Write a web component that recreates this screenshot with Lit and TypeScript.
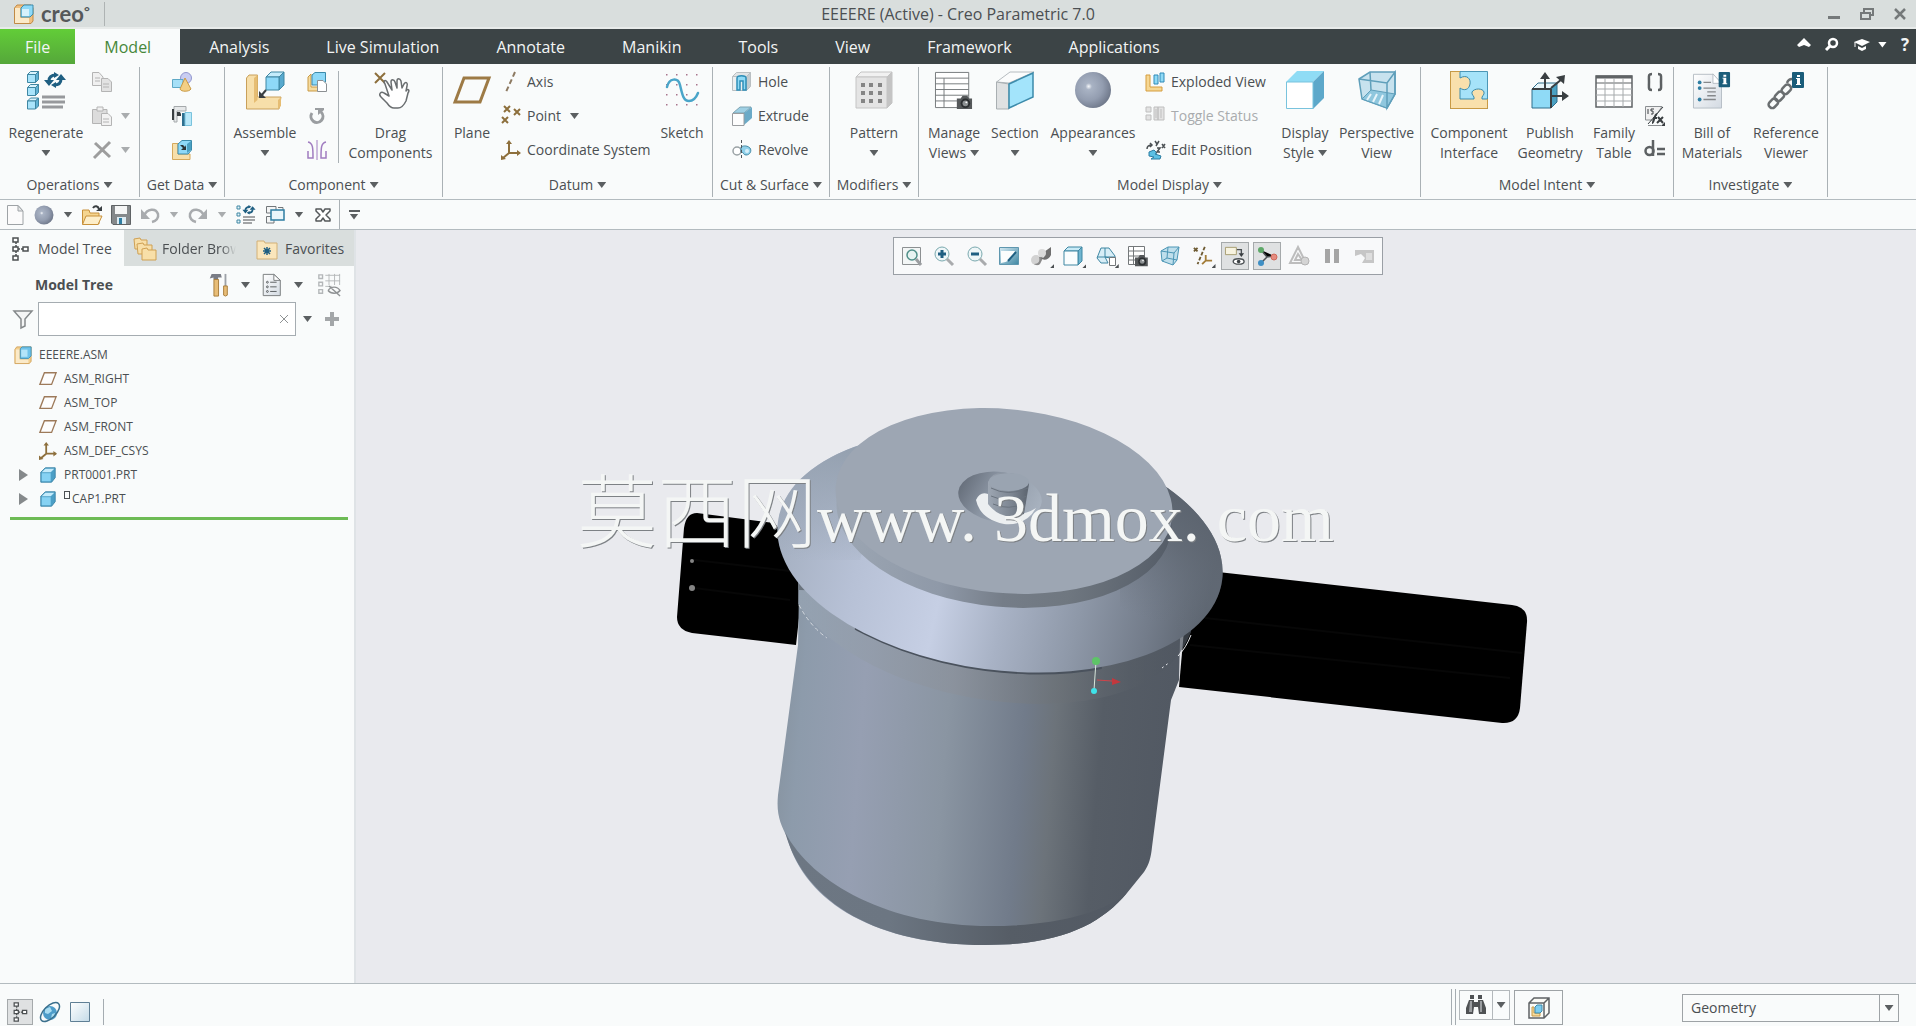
import { LitElement, html, svg, css, nothing, type TemplateResult, type SVGTemplateResult } from "lit";
import { customElement, state } from "lit/decorators.js";
import { classMap } from "lit/directives/class-map.js";

/* ---------- icon drawing helpers ---------- */

const OUT = "#3f87a3";

/** A box seen from the front right: front face, top face, side face. */
const box = (x: number, y: number, s: number, d: number, front = "#a9e4fb", top = "#d9f3fd", side = "#5fb1d3", line = OUT, w = 1): SVGTemplateResult => svg`
  <g stroke=${line} stroke-width=${w} stroke-linejoin="round">
    <path fill=${top} d=${`M${x} ${y + d}L${x + d} ${y}H${x + s + d}L${x + s} ${y + d}Z`}></path>
    <path fill=${side} d=${`M${x + s} ${y + d}L${x + s + d} ${y}V${y + s}L${x + s} ${y + s + d}Z`}></path>
    <path fill=${front} d=${`M${x} ${y + d}H${x + s}V${y + s + d}H${x}Z`}></path>
  </g>`;

const camera = (x: number, y: number): SVGTemplateResult => svg`
  <g transform=${`translate(${x} ${y})`}>
    <path fill="#55585a" d="M0 3H4L6 0H11L13 3H16V14H0Z"></path>
    <circle cx="9" cy="8" r="5" fill="#2c2f31"></circle>
    <circle cx="9" cy="8" r="3" fill="#8d9193"></circle>
    <circle cx="10" cy="7" r="1" fill="#fff"></circle>
  </g>`;

/** Two arrows chasing each other. */
const swirl = (x: number, y: number, k: number): SVGTemplateResult => svg`
  <g transform=${`translate(${x} ${y}) scale(${k})`}>
    <path fill="none" stroke="#1f5f82" stroke-width="3" d="M4 9C4 4 7 3 11 3M16 7C16 12 13 13 9 13"></path>
    <path fill="#1f5f82" d="M-1 8H9L4 14ZM11 8H21L16 2ZM9 0L14 3L9 6ZM11 10L6 13L11 16Z"></path>
  </g>`;

const info = (x: number, y: number): SVGTemplateResult => svg`
  <g transform=${`translate(${x} ${y})`}>
    <rect width="12" height="16" rx="1" fill="#1b5d7a"></rect>
    <path fill="#fff" d="M5 3H8V5H5ZM4 6H8V12H9V13H4V12H5V7H4Z"></path>
  </g>`;

const treeNodes = (c: string): SVGTemplateResult => svg`<g fill="#fff" stroke=${c} stroke-width="1.5"><path d="M2 1H7V5H2ZM2 10H7V14H2ZM2 19H7V23H2ZM12 10H17V14H12Z"></path><path stroke-dasharray="2 1" d="M5 5V10M5 14V19M7 12H12"></path></g>`;

const axes = svg`<path fill="none" stroke="#8d6f3c" stroke-width="2" d="M8 3V13H19M8 13L2 18"></path><path fill="#8d6f3c" d="M8 0L11 4H5ZM16 10L20 13L16 16ZM0 20V15L5 19Z"></path>`;
const cross = (x: number, y: number, r: number, c = "#8d6f3c", w = 2): SVGTemplateResult => svg`<path stroke=${c} stroke-width=${w} d=${`M${x - r} ${y - r}L${x + r} ${y + r}M${x + r} ${y - r}L${x - r} ${y + r}`}></path>`;
const lBracket = svg`<path fill="#f6dca0" stroke="#c99a45" d="M1 5L4 2V15H19L16 19H1Z"></path>`;

type Icon = { box: string; art: SVGTemplateResult };
const ICONS: Record<string, Icon> = {
  /* large ribbon icons, 38 units */
  regenerate: { box: "0 0 38 38", art: svg`${box(0.5, 0.5, 8, 3)}${box(0.5, 13.5, 8, 3)}${box(0.5, 27, 8, 3)}${swirl(18, 1, 1)}<path stroke="#97999c" stroke-width="3" d="M15 26H38M15 31H38M15 36H36"></path>` },
  assemble: { box: "0 0 38 38", art: svg`
    <path fill="#f7dfaa" stroke="#c9a05a" d="M0.5 7L3 4H11.5V26H35L33 38H0.5Z"></path><path fill="#e6bd73" d="M8 7L11.5 4V29L8 32ZM32 29L35 26V35L32 38Z"></path>
    ${box(20, 1, 13, 5, "#8ed9f8", "#c4ecfb", "#58a9ce")}<path stroke="#3a3f42" stroke-width="2" d="M20 19L15 25"></path><path fill="#3a3f42" d="M13 20V27H20Z"></path>` },
  drag: { box: "0 0 38 38", art: svg`${cross(8, 7, 5, "#8d6f3c", 2)}
    <path fill="#fff" stroke="#6a6e70" stroke-width="1.5" stroke-linejoin="round" stroke-linecap="round" d="M13 13C11 10 13 8 15 11L20 19L19 11C19 8 22 8 23 11L25 17V10C25 7 28 7 29 10L30 17L32 13C34 10 36 12 35 15L34 20C36 17 38 19 36 22L34 30C32 34 30 37 26 37H22C19 37 17 35 15 32L9 26C6 23 9 20 12 22L17 25Z"></path>` },
  plane: { box: "0 0 38 38", art: svg`<path fill="none" stroke="#9d7a45" stroke-width="3" d="M11 7H36L27 31H2Z"></path>` },
  sketch: { box: "0 0 38 38", art: svg`<g fill="#a8748c">${[4, 14, 24, 34].map((x) => [4, 14, 24, 34].map((y) => svg`<rect x=${x - 1} y=${y - 1} width="1.5" height="1.5"></rect>`))}</g>
    <path fill="none" stroke="#4aa5c9" stroke-width="2.5" stroke-linecap="round" d="M4 16C6 7 15 6 17 14C19 22 20 30 26 30C31 30 33 27 35 22"></path>` },
  pattern: { box: "0 0 38 38", art: svg`${box(1, 1, 31, 5, "#e4e4e4", "#f1f1f1", "#c4c4c4", "#c4c4c4")}
    <g fill="#858585">${[6, 14, 23].map((x) => [12, 20, 28].map((y) => svg`<rect x=${x} y=${y} width="4" height="4"></rect>`))}</g>` },
  manage: { box: "0 0 40 38", art: svg`<path fill="#fff" stroke="#74787a" stroke-width="1" d="M0.5 0.5H35.5V37.5H0.5ZM0.5 6.5H35.5M0.5 12.5H35.5M0.5 18.5H35.5M0.5 24.5H35.5M0.5 30.5H35.5M9.5 6.5V37.5"></path>${camera(23, 25)}` },
  section: { box: "0 0 38 38", art: svg`<path fill="#fbfcfc" stroke="#b6bcc0" d="M0.5 11L14 1H38L13 12Z"></path><path fill="#dfe1e2" stroke="#a9afb2" d="M0.5 11L13 13V38H0.5Z"></path><path fill="#a3e4fb" stroke="#3c8bab" stroke-width="1.5" d="M13 13L37 2V26L13 37Z"></path>` },
  sphere: { box: "0 0 38 38", art: svg`<circle cx="19" cy="19" r="18" fill="url(#g-sphere)"></circle>` },
  display: { box: "0 0 38 38", art: svg`<path fill="#8fdcf5" d="M0 11L11 0H38L27 11Z"></path><path fill="#5da8ca" d="M27 11L38 0V27L27 38Z"></path><path fill="#fff" stroke="#79c3dd" d="M0.5 11H27V37.5H0.5Z"></path>` },
  perspective: { box: "0 0 38 38", art: svg`<path fill="#c7e2ee" stroke="#5f9fba" stroke-width="1.5" d="M1 8L12 1H37L37 23L29 37L4 28Z"></path><path fill="#8fc7de" stroke="#5f9fba" d="M4 28L13 19L37 23L29 37Z"></path><path fill="none" stroke="#5f9fba" stroke-width="1.5" d="M1 8L29 12L37 1V23L29 37V12M12 1L13 19"></path><path stroke="#e6f4fa" stroke-width="2" d="M13 23L9 29M19 23L15 31M25 24L21 33"></path>` },
  interface: { box: "0 0 38 38", art: svg`<path fill="#a6e3f9" stroke="#4c96b5" d="M0.5 0.5H37.5V37.5H0.5Z"></path>
    <path fill="#f9e0ac" stroke="#3c8bab" stroke-width="1" d="M0.5 0.5H10V7C17 3 21 8 20 13C19 19 14 20 10 17V28H24C25 25 21 24 22 21C24 17 33 17 34 21C35 24 31 25 32 28H37.5V37.5H0.5Z"></path><path fill="none" stroke="#c99a45" stroke-width="1" d="M37.5 28V37.5H0.5V0.5H10"></path>` },
  publish: { box: "0 0 38 38", art: svg`${box(1, 12, 19, 6, "#8fdaf6", "#e8f6fb", "#4aa0c2", "#2f6f8c")}<path fill="none" stroke="#3a3f42" stroke-width="2" d="M1 18H20M20 18V37M14 18V6M20 17L31 8M21 25H33"></path><path fill="#3a3f42" d="M14 1L19 8H9ZM34 4L33 13L25 6ZM38 25L31 30V20Z"></path>` },
  family: { box: "0 0 38 38", art: svg`<path fill="#fff" stroke="#5f6365" stroke-width="1.5" d="M1 5H37V36H1Z"></path><path stroke="#5f6365" stroke-width="3" d="M1 6H37"></path><path stroke="#5f6365" d="M1 12H37"></path><path stroke="#a6aaac" d="M1 18H37M1 24H37M1 30H37M10 7V36M19 7V36M28 7V36"></path>` },
  bill: { box: "0 0 40 38", art: svg`<path fill="url(#g-paper)" stroke="#b5bdc4" d="M0.5 2.5H21L30 12V38H0.5Z"></path><path fill="#fff" stroke="#b5bdc4" d="M21 2V12H30Z"></path><g fill="#2e7ea3"><circle cx="7" cy="11" r="2"></circle><circle cx="7" cy="17" r="2"></circle><circle cx="7" cy="29" r="2"></circle></g><path stroke="#85888b" stroke-width="1.5" d="M11 11H19M11 17H24M15 21H24M15 25H24M11 29H24"></path>${info(27, 0)}` },
  reference: { box: "0 0 38 38", art: svg`<g fill="none" stroke="#6a6e70" stroke-width="2.5"><rect x="-5" y="-3" width="10" height="7" rx="3" transform="translate(6 32) rotate(-45)"></rect><rect x="-5" y="-3" width="10" height="7" rx="3" transform="translate(12 25) rotate(-45)"></rect><rect x="-5" y="-3" width="10" height="7" rx="3" transform="translate(19 18) rotate(-45)"></rect><path d="M20 12C21 9 23 8 25 8"></path></g>${info(25, 1)}` },

  /* small icons, 20 units */
  copy: { box: "0 0 20 20", art: svg`<g fill="#f0f0f0" stroke="#b4b4b4"><path d="M0.5 0.5H7L11 5V13.5H0.5Z"></path><path fill="#e2e2e2" d="M9.5 6.5H16L19.5 10V19.5H9.5Z"></path></g><path stroke="#b4b4b4" d="M3 6H8M3 9H8M11 12H17M11 15H17"></path>` },
  paste: { box: "0 0 20 20", art: svg`<g stroke="#b4b4b4"><path fill="#dcdcdc" d="M0.5 3.5H15V17.5H0.5Z"></path><path fill="#f0f0f0" d="M5 1H11V5H5Z"></path><path fill="#f2f2f2" d="M9.5 7.5H16L19.5 11V19.5H9.5Z"></path><path d="M11 13H17M11 16H17"></path></g>` },
  remove: { box: "0 0 20 20", art: svg`<path stroke="#9d9d9d" stroke-width="3" d="M3 3L18 17M18 2L2 18"></path>` },
  shapes: { box: "0 0 20 20", art: svg`<circle cx="14" cy="6" r="5.5" fill="#c9cdf2" stroke="#9297cf"></circle><path fill="#a6e0f7" stroke="#5fa9c6" d="M0.5 7.5H11V15.5H0.5Z"></path><path fill="#f3cf85" stroke="#c99a45" d="M13 6L19 17C17 20 9 20 8 17Z"></path>` },
  copygeom: { box: "0 0 20 20", art: svg`<path fill="#e6e8e9" stroke="#a5a9ab" d="M2 0.5H14V5H5V16H2Z"></path><path fill="#3a3f42" d="M0 3H2V14H0Z"></path><path fill="#2e6f8f" d="M10 7H13V20H10Z"></path><path fill="#b9e7f8" stroke="#79c3dd" d="M13 6.5H19.5V19.5H13Z"></path><path fill="#3a3f42" d="M5 6H8L9 8V10H5Z"></path>` },
  shrinkwrap: { box: "0 0 20 20", art: svg`<path fill="#f7dfaa" stroke="#d5a95c" d="M0.5 3.5H6V14H18V19.5H0.5Z"></path><path fill="#8ed9f8" stroke="#3c8bab" d="M6 4L10 0.5H19.5V10L16 14H6Z"></path><path fill="#4aa0c2" d="M15 4L19 1V10L15 13Z"></path><path fill="#2b3437" d="M8 5H11L13 7L14 5V10H9L11 8Z"></path>` },
  create: { box: "0 0 20 20", art: svg`${lBracket}<path fill="#8ed9f8" stroke="#3c8bab" d="M5 3L8 0.5H18.5V10L15 13H5Z"></path><path fill="#fff" stroke="#8b8f92" d="M10.5 8.5H16L19.5 12V19.5H10.5Z"></path>` },
  repeat: { box: "0 0 20 20", art: svg`<path fill="none" stroke="#9a9da0" stroke-width="3" d="M5 7A6 6 0 1 0 14 6"></path><path fill="#9a9da0" d="M8 2H17V4L11 9V4H8Z"></path>` },
  mirror: { box: "0 0 20 20", art: svg`<g fill="none" stroke="#a07cc0" stroke-width="1.5"><path d="M1 2C6 3 6 8 6 18H1V11M19 2C14 3 14 8 14 18H19V11"></path></g><path stroke="#a07cc0" d="M10 0V20"></path>` },
  axis: { box: "0 0 20 20", art: svg`<path stroke="#8d7a62" stroke-width="2" stroke-dasharray="5 3" d="M14 0L5 20"></path>` },
  point: { box: "0 0 20 20", art: svg`${cross(6, 3, 3)}${cross(16, 6, 3)}${cross(4, 14, 3)}` },
  csys: { box: "0 0 20 20", art: axes },
  hole: { box: "0 0 20 20", art: svg`${box(0.5, 0.5, 14, 4, "#eceff0", "#e1e4e5", "#c2cbcf", "#b9bfc2")}<path fill="#8fdaf6" stroke="#2e8fb8" stroke-width="1.5" d="M5 18V6C5 3 14 3 14 6V18H11V9H8V18Z"></path>` },
  extrude: { box: "0 0 20 20", art: svg`<path fill="#9fd0e4" stroke="#7fa4b3" d="M1 7L8 1H19L12 7Z"></path><path fill="#6baac7" d="M12 7L20 1V12L12 19Z"></path><path fill="#fdfdfd" stroke="#9a9da0" d="M0.5 7.5H12V19.5H0.5Z"></path>` },
  revolve: { box: "0 0 20 20", art: svg`<ellipse cx="5" cy="11" rx="4" ry="4" fill="#fff" stroke="#9aa2a5" stroke-width="1.5"></ellipse><path fill="#8fd0ea" stroke="#3f87a3" d="M9 7C12 5 16 6 18 8C20 11 18 15 14 15C11 15 12 12 9 12Z"></path><circle cx="15" cy="11" r="2" fill="#d8f0f9"></circle><path stroke="#50565a" stroke-dasharray="3 2" d="M9.5 0V20"></path>` },
  exploded: { box: "0 0 20 20", art: svg`<path fill="#f6d793" stroke="#d59d3f" stroke-width="1" d="M1 3H5V15H17V19H1Z"></path><path fill="#8fdaf6" stroke="#2f8ab8" d="M9 3H13V12H9ZM15 1H19V10H15Z"></path>` },
  toggle: { box: "0 0 20 20", art: svg`<g fill="#e3e3e3" stroke="#bfbfbf"><path d="M1 1H6V6H1ZM1 9H6V14H1ZM9 1H13V14H9ZM13 1H19V14H13Z"></path><path d="M16 3V12M11 3V12"></path></g>` },
  editpos: { box: "0 0 20 20", art: svg`<path fill="#5cc0e4" stroke="#2e7ea3" d="M4 12L9 10L12 13L10 14L16 16L15 19H6L9 17L4 16Z"></path><path fill="none" stroke="#4b5053" stroke-width="1.5" d="M2 9C2 6 4 5 7 5M5 3L7 5L5 7M10 1L12 4M14 1L11 6M12 8H15L12 12H15M17 4L20 8M20 4L17 8"></path>` },
  params: { box: "0 0 20 20", art: svg`<path fill="none" stroke="#5d6163" stroke-width="2.5" d="M7 2C3 2 4 4 4 10C4 16 3 18 7 18M13 2C17 2 16 4 16 10C16 16 17 18 13 18"></path>` },
  relations: { box: "0 0 20 20", art: svg`<path fill="#f0f0f0" stroke="#8b8f92" d="M0.5 0.5H17L8 14H0.5Z"></path><path fill="none" stroke="#3a3f42" stroke-width="1" d="M3 3V8M9 3H6V5H8V8H6M18 1L3 18"></path><path fill="none" stroke="#3a3f42" stroke-width="2" d="M7 17C9 17 9 9 12 8M8 12H12M13 11L18 17M18 11L12 17"></path><path fill="none" stroke="#8b8f92" d="M3 19.5H16"></path><path fill="#3a3f42" d="M20 16V20H16Z"></path>` },
  dequals: { box: "0 0 20 20", art: svg`<path fill="none" stroke="#5d6163" stroke-width="2.5" d="M8 0V16"></path><circle cx="4.500" cy="11" r="4" fill="none" stroke="#5d6163" stroke-width="2.5"></circle><path stroke="#5d6163" stroke-width="2.5" d="M12 9H20M12 14H20"></path>` },

  /* quick access */
  newfile: { box: "0 0 20 20", art: svg`<path fill="#fbfbfb" stroke="#9ea3a6" d="M2.5 0.5H13L18 6V19.5H2.5Z"></path><path fill="#e6e8e9" stroke="#9ea3a6" d="M13 0.5V6H18Z"></path>` },
  open: { box: "0 0 20 20", art: svg`<path fill="#f5d58f" stroke="#c8913a" d="M0.5 5H7L8 8H17V19H0.5Z"></path><path fill="#fdeec9" stroke="#c8913a" d="M4 11H20L16 19.5H0.5Z"></path><path fill="none" stroke="#3a3f42" stroke-width="2" d="M11 3C13 0 16 1 17 4"></path><path fill="#3a3f42" d="M20 1V6H14Z"></path>` },
  save: { box: "0 0 20 20", art: svg`<path fill="#85898b" stroke="#5f6365" d="M0.5 0.5H19.5V19.5H2L0.5 18Z"></path><path fill="#f5f6f6" d="M4 1H16V9H4Z"></path><path fill="#dcebf2" d="M6 12H15V19H6Z"></path><path fill="#2e7ea3" d="M8 13H11V19H8Z"></path>` },
  undo: { box: "0 0 20 20", art: svg`<path fill="none" stroke="#a8abae" stroke-width="2.5" d="M4 11C7 3 16 3 18 9C19 13 16 16 12 17"></path><path fill="#a8abae" d="M1 4V14H10Z"></path>` },
  redo: { box: "0 0 20 20", art: svg`<path fill="none" stroke="#a8abae" stroke-width="2.5" d="M16 11C13 3 4 3 2 9C1 13 4 16 8 17"></path><path fill="#a8abae" d="M19 4V14H10Z"></path>` },
  regensmall: { box: "0 0 20 20", art: svg`<g fill="#e6f4fa" stroke="#3f87a3"><path d="M1 1H4V4H1ZM1 8H4V11H1ZM1 15H4V18H1Z"></path></g>${swirl(7, 0, 0.6)}<path stroke="#85888b" stroke-width="1.5" d="M7 12H19M7 15H19M7 18H16"></path>` },
  windows: { box: "0 0 20 20", art: svg`<g fill="#f4f5f5" stroke="#72777a"><path d="M1.5 1.5H11V8H1.5ZM1.5 11.5H9V18H1.5ZM13 2.5H18V8"></path></g><path fill="#eaf6fb" stroke="#2e7ea3" stroke-width="1.5" d="M6 5H19V15H6Z"></path>` },
  closewin: { box: "0 0 20 20", art: svg`<path fill="#fff" stroke="#54585a" stroke-width="1.5" stroke-linejoin="round" d="M3 4H8L10 7L12 4H17V6L13 10L17 14V16H12L10 13L8 16H3V14L7 10L3 6Z"></path>` },

  /* title and tab bar */
  logo: { box: "0 0 20 20", art: svg`<path fill="#f0bf80" stroke="#c08a45" d="M0.5 4L3 1H17L19 4V17L17 19.5H0.5Z"></path><path fill="#fbeac9" d="M1 4H6V14H15V19H1Z"></path><path fill="#8ed9f8" stroke="#3c8bab" d="M7 4L10 1H19V10L16 13H7Z"></path><path fill="#d5f1fc" d="M8 5H15V12H8Z"></path>` },
  minimize: { box: "0 0 14 14", art: svg`<path fill="#75797a" d="M1 9H13V12H1Z"></path>` },
  restore: { box: "0 0 14 14", art: svg`<path fill="none" stroke="#75797a" stroke-width="2" d="M4 5V2H13V8H10M1 6H10V12H1Z"></path>` },
  close: { box: "0 0 14 14", art: svg`<path stroke="#75797a" stroke-width="2.5" d="M2 2L12 12M12 2L2 12"></path>` },
  up: { box: "0 0 14 14", art: svg`<path fill="#fff" d="M7 0L14 7L12 9L7 7L2 9L0 7Z"></path>` },
  find: { box: "0 0 14 14", art: svg`<circle cx="8" cy="5" r="4" fill="none" stroke="#fff" stroke-width="2.5"></circle><path stroke="#fff" stroke-width="3" d="M5 8L1 12"></path>` },
  learn: { box: "0 0 14 14", art: svg`<path fill="#fff" d="M7 1L15 4L7 8L-1 4ZM3 8L7 10L11 8V11L7 13L3 11Z"></path><path stroke="#fff" d="M0 4V9"></path>` },

  /* left panel */
  tree: { box: "0 0 18 24", art: treeNodes("#4c5052") },
  folders: { box: "0 0 24 24", art: svg`<g fill="#f8dfa8" stroke="#cfa053"><path d="M1 2L7 1L8 3H14V12H2Z"></path><path d="M4 7L10 6L11 8H19V17H5Z"></path><path d="M9 12L14 11L15 13H23V23H9Z"></path></g>` },
  favorite: { box: "0 0 24 24", art: svg`<path fill="#fae6bc" stroke="#d2b077" d="M2 4H9L10 6H22V22H2Z"></path><path stroke="#1f5f82" stroke-width="1.5" d="M12 10V18M8 14H16M9 11L15 17M15 11L9 17"></path>` },
  tools: { box: "0 0 24 26", art: svg`<path fill="#7a7d86" d="M2 6L4 1H14L15 5H11V7H6V5Z"></path><path fill="#e8bd77" stroke="#a57a37" d="M6.500 7H11.500V25H6.500Z"></path><path fill="#9da2a8" d="M18 1H20V14H18Z"></path><path fill="#e8bd77" stroke="#a57a37" d="M17 14H21V24L19 25L17 24Z"></path>` },
  settings: { box: "0 0 24 26", art: svg`<path fill="url(#g-paper)" stroke="#74787a" d="M2.5 1.5H14L21 8V24.5H2.5Z"></path><path fill="#fff" stroke="#74787a" d="M14 1.5V8H21Z"></path><g fill="none" stroke="#54585a"><circle cx="7" cy="10" r="1"></circle><circle cx="7" cy="15" r="1"></circle><circle cx="7" cy="20" r="1"></circle></g><path stroke="#54585a" d="M10 10H17M10 15H17M10 20H17"></path>` },
  columns: { box: "0 0 26 26", art: svg`<g fill="none" stroke="#b4b7b9" stroke-width="1.5"><path d="M2 2H6V6H2ZM2 10H6V14H2ZM2 18H6V22H2Z"></path></g><path fill="none" stroke="#b4b7b9" d="M9 2.5H25M9 8.5H25M9 14.5H16M13 1V13M19 1V13M24.5 1V13"></path><path fill="none" stroke="#8f9294" stroke-width="1.5" d="M12 19C15 14 22 14 25 19C22 23 15 23 12 19M13 14L25 25"></path>` },
  funnel: { box: "0 0 20 20", art: svg`<path fill="#f4f5f5" stroke="#85898b" stroke-width="1.5" d="M1 2H19L12 10V17L8 19V10Z"></path>` },
  clear: { box: "0 0 10 10", art: svg`<path stroke="#8f9294" d="M1 1L9 9M9 1L1 9"></path>` },
  plus: { box: "0 0 14 14", art: svg`<path stroke="#a3a6a8" stroke-width="4" d="M7 0V14M0 7H14"></path>` },
  asm: { box: "0 0 20 20", art: svg`<path fill="#f3cf8f" stroke="#d1a35a" d="M1 4L3 1H19V17L17 19.500H1Z"></path><path fill="#fbeac9" d="M2 4H6V15H16V19H2Z"></path><path fill="#6fc3ea" stroke="#3f92b8" d="M7 3L9 1H19V11L16 14H7Z"></path><path fill="#b4e5f9" d="M8 4H15V12H8Z"></path>` },
  datum: { box: "0 0 20 20", art: svg`<path fill="#fdfdfd" stroke="#9d7a5a" stroke-width="1.5" d="M6 3H19L14 16H1Z"></path>` },
  part: { box: "0 0 20 20", art: svg`<path fill="#4b9fc6" stroke="#3a83a6" d="M2 7L7 2H18V13L14 18H2Z"></path><path fill="#c4ebfb" d="M3 7L7 3H17L13 7Z"></path><path fill="#86d2f3" d="M3 8H13V17H3Z"></path>` },

  /* viewport toolbar */
  refit: { box: "0 0 20 20", art: svg`<path fill="#f3f6f6" stroke="#8c9092" d="M0.5 1.5H18.5V18.5H0.5Z"></path><circle cx="10" cy="9" r="5" fill="#e7f3f1" stroke="#4f8f88" stroke-width="1.5"></circle><path stroke="#9a9da0" stroke-width="3" d="M14 13L19 19"></path>` },
  zoomin: { box: "0 0 20 20", art: svg`<circle cx="8" cy="8" r="7" fill="#eef6f8" stroke="#7aa9ae" stroke-width="1"></circle><path stroke="#1f5f82" stroke-width="3" d="M4 8H12M8 4V12"></path><path stroke="#a9abad" stroke-width="3" d="M13 13L19 19"></path>` },
  zoomout: { box: "0 0 20 20", art: svg`<circle cx="8" cy="8" r="7" fill="#eef6f8" stroke="#7aa9ae" stroke-width="1"></circle><path stroke="#1f5f82" stroke-width="3" d="M4 8H12"></path><path stroke="#a9abad" stroke-width="3" d="M13 13L19 19"></path>` },
  repaint: { box: "0 0 20 20", art: svg`<path fill="url(#g-paint)" stroke="#5f97af" d="M0.5 1.5H19.5V18.5H0.5Z"></path><path fill="#fbfdfd" d="M2 5H16C15 11 10 16 2 17Z"></path><path stroke="#1f5f82" stroke-width="2" d="M17 6L9 15"></path>` },
  shading: { box: "0 0 20 20", art: svg`<circle cx="5" cy="14" r="5" fill="#d2d2d2"></circle><path fill="#8a8a8a" d="M8 11L12 10L11 14L9 18C7 20 4 19 3 18C8 18 9 15 8 11Z"></path><path fill="#6f6f6f" d="M13 6L20 1V9C18 14 12 15 10 12C14 12 14 9 13 6Z"></path><circle cx="11" cy="7" r="4" fill="#dadada"></circle>` },
  boxview: { box: "0 0 20 20", art: box(1, 1, 14, 4, "#fafdfe", "#c8ebf7", "#6fb5d0") },
  saved: { box: "0 0 20 20", art: svg`<path fill="#d8eef7" stroke="#3f87a3" d="M1 12L5 2H13L19 10V13L9 11L12 17H5Z"></path><path stroke="#3f87a3" d="M1 11H19M9 2V11"></path><path fill="#fff" stroke="#74787a" d="M13.500 11.500H19.500V19.500H13.500Z"></path>` },
  viewmgr: { box: "0 0 20 20", art: svg`<path fill="#fff" stroke="#74787a" d="M0.5 0.5H16.5V18.5H0.5ZM0.5 5H16.5M0.5 10H16.5M0.5 14H16.5M5.5 1V18"></path><g transform="translate(7 9) scale(0.8)">${camera(0, 0)}</g>` },
  persp: { box: "0 0 20 20", art: svg`<path fill="#bfdfec" stroke="#4c96b5" d="M1 5L8 1H19L17 14L13 19L2 15Z"></path><path fill="none" stroke="#4c96b5" d="M1 5L14 7L19 1M14 7L13 19M8 1L7 12L17 14M7 12L2 15"></path>` },
  datums: { box: "0 0 22 20", art: svg`${cross(3, 3, 2, "#6e5b33")}<path stroke="#6e5b33" stroke-width="2" stroke-dasharray="4 2" d="M13 0L5 19"></path><path fill="none" stroke="#a37d38" stroke-width="2" d="M14 9V15H21M14 15L10 19"></path>` },
  annot: { box: "0 0 22 20", art: svg`<path fill="#f7f3e0" stroke="#a39a6c" d="M0.5 0.5H12.5V8.5H0.5Z"></path><path fill="none" stroke="#4b5053" stroke-width="1.5" d="M13 3H18V8"></path><path fill="#3a3f42" d="M15 7H21L18 11Z"></path><ellipse cx="15" cy="16" rx="6" ry="3" fill="#fff" stroke="#4b5053" stroke-width="1.5"></ellipse><circle cx="15" cy="16" r="2" fill="#3a3f42"></circle>` },
  spin: { box: "0 0 20 20", art: svg`<path stroke="#4b5053" stroke-width="1.5" d="M4 4L10 11L17 10M10 11L4 17"></path><circle cx="4" cy="4" r="3" fill="#5ea868"></circle><circle cx="17" cy="11" r="3" fill="#e58c80" stroke="#d06a5c"></circle><circle cx="4" cy="17" r="3" fill="#3f8fc4"></circle>` },
  simulate: { box: "0 0 20 20", art: svg`<path fill="none" stroke="#bdbdbd" stroke-width="2" d="M9 1L17 17H1ZM9 8L13 14H6Z"></path><circle cx="16" cy="15" r="4" fill="#d4d4d4" stroke="#b3b3b3"></circle>` },
  pause: { box: "0 0 20 20", art: svg`<path fill="#a5a5a5" d="M3 3H8V17H3ZM12 3H17V17H12Z"></path>` },
  replay: { box: "0 0 20 20", art: svg`<path fill="#c6c6c6" d="M1 4H20V17H8L11 12L7 8L1 10Z"></path><path fill="#dedede" d="M12 7H18V14H12Z"></path>` },

  /* status bar */
  globe: { box: "0 0 20 20", art: svg`<circle cx="10" cy="11" r="7" fill="#4d9cc9"></circle><path fill="#a9dcf1" d="M5 7L10 5L12 9L8 12L5 11ZM12 12L15 11L14 15L11 16Z"></path><ellipse cx="10" cy="10" rx="12" ry="6" fill="none" stroke="#3a6f8c" stroke-width="1.5" transform="rotate(-45 10 10)"></ellipse>` },
  panel: { box: "0 0 20 20", art: svg`<path fill="url(#g-panel)" stroke="#5f7f95" d="M0.5 0.5H19.500V19.500H0.500Z"></path>` },
  binoculars: { box: "0 0 20 20", art: svg`<path fill="#4f5254" d="M4 0H8V4H4ZM12 0H16V4H12ZM3 5H8V12L7 19H0V13ZM12 5H17L20 13V19H13L12 12ZM8 7H12V12H8Z"></path><path fill="#9a9da0" d="M4 6H6V17H3ZM14 6H16V17H14Z"></path>` },
  boxselect: { box: "0 0 24 24", art: svg`<path fill="#fbfbf6" stroke="#5f6365" stroke-width="1.5" d="M2 7L7 2H22V17L17 22H2ZM2 7H17V22M17 7L22 2"></path><path fill="#f6dca0" stroke="#c99a45" d="M5 11H7V17H13V20H5Z"></path><path fill="#7ccdf0" stroke="#3c8bab" d="M8 11L10 9H15V15L13 17H8Z"></path>` },
};

const icon = (name: string, size = "md"): TemplateResult => {
  const i = ICONS[name];
  return html`<svg class="ic ${size}" viewBox=${i.box} aria-hidden="true">${i.art}</svg>`;
};
const caret = (extra = ""): TemplateResult => html`<i class="caret ${extra}"></i>`;

/* ---------- 3D viewport ---------- */

@customElement("model-viewport")
export class ModelViewport extends LitElement {
  static styles = css`
    :host { display: block; position: absolute; inset: 0; }
    svg { display: block; width: 100%; height: 100%; }
    .mark { fill: #f4f6f5; font-size: 80px; font-weight: 300; font-family: "Noto Sans CJK SC", sans-serif; filter: drop-shadow(1px 1px 0 #7d8185); }
    .latin { font-size: 68px; font-weight: 400; font-family: "Liberation Serif", serif; }
  `;

  render() {
    return html`<svg viewBox="356 230 1560 753" role="img" aria-label="EEEERE assembly">
      <defs>
        <linearGradient id="body" gradientUnits="userSpaceOnUse" x1="783" y1="740" x2="1168" y2="770">
          <stop offset="0" stop-color="#8996a4"></stop><stop offset="0.04" stop-color="#8d9bab"></stop><stop offset="0.2" stop-color="#969fb2"></stop>
          <stop offset="0.42" stop-color="#8a95a2"></stop><stop offset="0.62" stop-color="#717b8a"></stop><stop offset="0.7" stop-color="#6c737a"></stop>
          <stop offset="0.82" stop-color="#565d66"></stop><stop offset="1" stop-color="#525963"></stop>
        </linearGradient>
        <linearGradient id="chamfer" gradientUnits="userSpaceOnUse" x1="787" y1="0" x2="1130" y2="0">
          <stop offset="0" stop-color="#6d7783"></stop><stop offset="0.3" stop-color="#6c7682"></stop><stop offset="0.65" stop-color="#565d66"></stop><stop offset="1" stop-color="#525963"></stop>
        </linearGradient>
        <linearGradient id="flange" gradientUnits="userSpaceOnUse" x1="778" y1="520" x2="1214" y2="560">
          <stop offset="0" stop-color="#a4afc0"></stop><stop offset="0.2" stop-color="#b7c1d6"></stop><stop offset="0.4" stop-color="#c6cfe4"></stop>
          <stop offset="0.55" stop-color="#a8b2c5"></stop><stop offset="0.72" stop-color="#8e98a8"></stop><stop offset="0.88" stop-color="#737c8a"></stop><stop offset="1" stop-color="#5c646f"></stop>
        </linearGradient>
        <linearGradient id="back" gradientUnits="userSpaceOnUse" x1="830" y1="445" x2="800" y2="560">
          <stop offset="0" stop-color="#95a1b0"></stop><stop offset="1" stop-color="#95a1b0" stop-opacity="0"></stop>
        </linearGradient>
        <linearGradient id="right" gradientUnits="userSpaceOnUse" x1="1200" y1="490" x2="1150" y2="620">
          <stop offset="0" stop-color="#59616c"></stop><stop offset="0.4" stop-color="#5f6772" stop-opacity="0.8"></stop><stop offset="1" stop-color="#6b7480" stop-opacity="0"></stop>
        </linearGradient>
        <linearGradient id="rim" gradientUnits="userSpaceOnUse" x1="850" y1="0" x2="1172" y2="0">
          <stop offset="0" stop-color="#9ba5b2"></stop><stop offset="0.3" stop-color="#8f99a8"></stop><stop offset="0.5" stop-color="#757d88"></stop><stop offset="0.7" stop-color="#6f7780"></stop><stop offset="1" stop-color="#555d68"></stop>
        </linearGradient>
        <linearGradient id="lip" gradientUnits="userSpaceOnUse" x1="798" y1="0" x2="1190" y2="0">
          <stop offset="0" stop-color="#98a5b4"></stop><stop offset="0.4" stop-color="#8b919b"></stop><stop offset="0.65" stop-color="#6d7379"></stop><stop offset="0.85" stop-color="#565d66"></stop><stop offset="1" stop-color="#4e555f"></stop>
        </linearGradient>
        <linearGradient id="hole" gradientUnits="userSpaceOnUse" x1="958" y1="480" x2="1040" y2="510">
          <stop offset="0" stop-color="#626a76"></stop><stop offset="0.4" stop-color="#8b95a3"></stop><stop offset="1" stop-color="#a9b3c0"></stop>
        </linearGradient>
        <linearGradient id="pin" gradientUnits="userSpaceOnUse" x1="986" y1="0" x2="1030" y2="0">
          <stop offset="0" stop-color="#a0a9b5"></stop><stop offset="0.6" stop-color="#7b8490"></stop><stop offset="1" stop-color="#59616c"></stop>
        </linearGradient>
        <clipPath id="flange-clip"><ellipse cx="1000" cy="551" rx="224" ry="119" transform="rotate(7.5 1000 551)"></ellipse></clipPath>
        <clipPath id="seam-clip"><rect x="866" y="600" width="250" height="90"></rect></clipPath>
      </defs>

      <path fill="#000" d="M697 513L774 523L830 583L801 600L796 645L692 633Q677 630 677 617L684 528Q686 513 697 513Z"></path>
      <path fill="#000" d="M1200 570L1512 605Q1528 607 1527 622L1520 708Q1518 724 1502 723L1179 687L1184 630Z"></path>
      <g stroke="#070707" stroke-width="2"><path d="M694 560L790 571M694 588L790 600M1205 618L1522 653M1190 645L1510 678"></path></g>
      <circle cx="692" cy="561" r="2" fill="#858585"></circle><circle cx="692" cy="588" r="3" fill="#858585"></circle>

      <path fill="url(#body)" d="M799 590L798 645L778 795C776 815 781 825 787 837C805 905 880 945 985 945C1060 945 1100 925 1127 893L1144 872C1149 865 1151 857 1152 847L1171 700L1179 680L1181 600Z"></path>
      <path fill="url(#chamfer)" d="M785 832C805 905 880 945 985 945C1060 945 1100 925 1127 893C1100 915 1050 926 990 926C890 926 812 884 785 832Z"></path>
      <path fill="url(#lip)" opacity="0.7" d="M798 575V604C840 665 940 703 1040 704C1115 703 1172 682 1191 632V580Z"></path>
      <path fill="none" stroke="#d5dae0" stroke-width="1" stroke-dasharray="4 3" d="M799 605Q810 626 827 638"></path>
      <path fill="none" stroke="#e5e7ea" stroke-width="1" d="M1191 635Q1186 648 1178 656"></path>
      <path fill="none" stroke="#e5e7ea" stroke-width="1" stroke-dasharray="2 3" d="M1162 668L1170 662"></path>

      <ellipse cx="1001" cy="553" rx="224" ry="119" transform="rotate(7.5 1001 553)" fill="#4a525d" clip-path="url(#seam-clip)"></ellipse>
      <ellipse cx="1000" cy="551" rx="224" ry="119" transform="rotate(7.5 1000 551)" fill="url(#flange)"></ellipse>
      <g clip-path="url(#flange-clip)">
        <path fill="url(#back)" d="M770 420H900L860 560H770Z"></path>
        <path fill="url(#right)" d="M1120 460H1230V640H1120Z"></path>
      </g>

      <ellipse cx="1004" cy="515" rx="168" ry="92" transform="rotate(5.3 1004 515)" fill="url(#rim)"></ellipse>
      <ellipse cx="1004" cy="501" rx="169" ry="92" transform="rotate(5.3 1004 501)" fill="#9da6b3"></ellipse>

      <ellipse cx="1000" cy="497" rx="42" ry="25" transform="rotate(8 1000 497)" fill="url(#hole)"></ellipse>
      <path fill="#eceff1" d="M976 500Q980 491 988 494Q988 510 1008 514Q1024 516 1036 508Q1026 526 1004 524Q980 519 976 500Z"></path>
      <path fill="url(#pin)" d="M988 482Q992 471 1008 473Q1028 475 1029 484L1024 514Q1002 522 988 504Z"></path>
      <ellipse cx="1009" cy="482" rx="20" ry="9" fill="#9aa4b1"></ellipse>
      <path fill="none" stroke="#6a737e" d="M991 488Q1008 497 1028 488M991 496Q1008 504 1027 496M993 504Q1008 511 1026 503"></path>

      <text class="mark" x="577" y="541">莫西网<tspan class="latin">www. 3dmox. com</tspan></text>

      <path stroke="#d8e6dc" stroke-width="1" d="M1096 661L1094 690"></path>
      <path stroke="#d0444a" stroke-width="1" d="M1097 680L1112 681"></path><path fill="#c2383e" d="M1112 678L1121 682L1112 685Z"></path>
      <circle cx="1096" cy="661" r="4" fill="#5ec468"></circle><circle cx="1094" cy="691" r="3" fill="#3fe3ea"></circle>
    </svg>`;
  }
}

/* ---------- ribbon data ---------- */

type Big = { icon: string; lines: string[]; menu?: boolean; rule?: boolean };
type Small = { icon: string; name: string; label?: string; menu?: boolean; off?: boolean };
type Group = { id: string; title: string; cells: (Big | Small[])[] };

const GROUPS: Group[] = [
  { id: "ops", title: "Operations", cells: [
    { icon: "regenerate", lines: ["Regenerate"], menu: true },
    [{ icon: "copy", name: "Copy", off: true }, { icon: "paste", name: "Paste", menu: true, off: true }, { icon: "remove", name: "Delete", menu: true, off: true }],
  ] },
  { id: "data", title: "Get Data", cells: [
    [{ icon: "shapes", name: "User-Defined Feature" }, { icon: "copygeom", name: "Copy Geometry" }, { icon: "shrinkwrap", name: "Shrinkwrap" }],
  ] },
  { id: "comp", title: "Component", cells: [
    { icon: "assemble", lines: ["Assemble"], menu: true },
    [{ icon: "create", name: "Create" }, { icon: "repeat", name: "Repeat", off: true }, { icon: "mirror", name: "Mirror Component" }],
    { icon: "drag", lines: ["Drag", "Components"], rule: true },
  ] },
  { id: "datum", title: "Datum", cells: [
    { icon: "plane", lines: ["Plane"] },
    [{ icon: "axis", name: "Axis", label: "Axis" }, { icon: "point", name: "Point", label: "Point", menu: true }, { icon: "csys", name: "Coordinate System", label: "Coordinate System" }],
    { icon: "sketch", lines: ["Sketch"] },
  ] },
  { id: "cut", title: "Cut & Surface", cells: [
    [{ icon: "hole", name: "Hole", label: "Hole" }, { icon: "extrude", name: "Extrude", label: "Extrude" }, { icon: "revolve", name: "Revolve", label: "Revolve" }],
  ] },
  { id: "mods", title: "Modifiers", cells: [{ icon: "pattern", lines: ["Pattern"], menu: true }] },
  { id: "view", title: "Model Display", cells: [
    { icon: "manage", lines: ["Manage", "Views"], menu: true },
    { icon: "section", lines: ["Section"], menu: true },
    { icon: "sphere", lines: ["Appearances"], menu: true },
    [{ icon: "exploded", name: "Exploded View", label: "Exploded View" }, { icon: "toggle", name: "Toggle Status", label: "Toggle Status", off: true }, { icon: "editpos", name: "Edit Position", label: "Edit Position" }],
    { icon: "display", lines: ["Display", "Style"], menu: true },
    { icon: "perspective", lines: ["Perspective", "View"] },
  ] },
  { id: "intent", title: "Model Intent", cells: [
    { icon: "interface", lines: ["Component", "Interface"] },
    { icon: "publish", lines: ["Publish", "Geometry"] },
    { icon: "family", lines: ["Family", "Table"] },
    [{ icon: "params", name: "Parameters" }, { icon: "relations", name: "Switch Dimensions" }, { icon: "dequals", name: "Relations" }],
  ] },
  { id: "invest", title: "Investigate", cells: [
    { icon: "bill", lines: ["Bill of", "Materials"] },
    { icon: "reference", lines: ["Reference", "Viewer"] },
  ] },
];

const TABS = ["File", "Model", "Analysis", "Live Simulation", "Annotate", "Manikin", "Tools", "View", "Framework", "Applications"];

const QUICK: [string, string, boolean?, boolean?][] = [
  ["newfile", "New"], ["sphere", "Appearance", true], ["open", "Open"], ["save", "Save"], ["undo", "Undo", true, true],
  ["redo", "Redo", true, true], ["regensmall", "Regenerate"], ["windows", "Windows", true], ["closewin", "Close"],
];

const VIEWTOOLS: [string, string, string?][] = [
  ["refit", "Refit"], ["zoomin", "Zoom In"], ["zoomout", "Zoom Out"], ["repaint", "Repaint"], ["shading", "Rendering Options", "more"],
  ["boxview", "Display Style", "more"], ["saved", "Saved Orientations", "more"], ["viewmgr", "View Manager"], ["persp", "Perspective View"],
  ["datums", "Datum Display Filters", "more"], ["annot", "Annotation Display", "on"], ["spin", "Spin Center", "on"],
  ["simulate", "Simulation"], ["pause", "Pause"], ["replay", "Replay"],
];

const TREE: { icon: string; name: string; open?: boolean; packed?: boolean }[] = [
  { icon: "datum", name: "ASM_RIGHT" }, { icon: "datum", name: "ASM_TOP" }, { icon: "datum", name: "ASM_FRONT" }, { icon: "csys", name: "ASM_DEF_CSYS" },
  { icon: "part", name: "PRT0001.PRT", open: true }, { icon: "part", name: "CAP1.PRT", open: true, packed: true },
];

@customElement("app-root")
export class AppRoot extends LitElement {
  @state() private tab = "Model";

  static styles = css`
    :host { display: flex; flex-direction: column; height: 100vh; overflow: hidden; background: #f9fbfb; color: #4b4f52; font: 14px/20px "Open Sans", "Noto Sans", sans-serif; }
    * { box-sizing: border-box; }
    button { font: inherit; color: inherit; background: none; border: 0; padding: 0; margin: 0; display: flex; align-items: center; justify-content: center; white-space: nowrap; }
    .ic { display: block; flex: none; overflow: visible; }
    .lg { width: 38px; height: 38px; }
    .md { width: 20px; height: 20px; }
    .sm { width: 18px; height: 18px; }
    .xs { width: 14px; height: 14px; }
    .xl { width: 24px; height: 24px; }
    .nodes { width: 18px; height: 24px; }
    .defs { position: absolute; width: 0; height: 0; }
    .caret { display: inline-block; flex: none; width: 9px; height: 6px; background: #5b5f61; clip-path: polygon(0 0, 100% 0, 50% 100%); }
    .caret.off { background: #a9acae; }
    .caret.white { background: #fff; }

    .title { flex: none; display: grid; grid-template-columns: 1fr auto 1fr; height: 29px; background: #d9dedd; border-bottom: 2px solid #e8ebea; }
    .brand { display: flex; align-items: center; gap: 7px; padding-left: 14px; height: 27px; }
    .brand .word { font: 700 22px/24px Lato, sans-serif; color: #55585a; display: flex; padding-right: 14px; border-right: 1px solid #aeb3b3; height: 24px; }
    .brand sup { font-size: 14px; line-height: 18px; }
    .caption { align-self: center; font-size: 16px; }
    .winbtns { display: flex; justify-content: flex-end; align-items: center; gap: 19px; padding-right: 9px; }

    .tabs { flex: none; display: flex; height: 35px; background: #3c4446; color: #f3f5f5; font-size: 16px; }
    .tabs .tab { padding: 0 28px; margin-left: 1px; }
    .tabs .file { padding: 0 25px; margin: 0; background: linear-gradient(180deg, #62cd38, #55a73a); }
    .tabs .active { padding: 0 29px; margin: 0; background: #f9fbfb; color: #46873a; }
    .tabs .tools { margin-left: auto; display: flex; align-items: center; gap: 14px; padding: 0 7px 4px 0; }
    .tools .pair { display: flex; align-items: center; gap: 9px; margin-left: 2px; }
    .tools .help { font: 700 17px/20px "Open Sans", sans-serif; }

    .ribbon { flex: none; display: grid; grid-template-columns: 140px 85px 218px 270px 117px 89px 502px 253px 154px; height: 136px; border-bottom: 1px solid #b3bbbf; }
    .group { display: flex; flex-direction: column; border-right: 1px solid #aab1b5; margin: 3px 0 2px; min-width: 0; }
    .cells { display: grid; height: 108px; }
    .ops { grid-template-columns: 92px 1fr; }
    .data { grid-template-columns: 1fr; justify-items: center; }
    .comp { grid-template-columns: 80px 33px 1fr; }
    .datum { grid-template-columns: 58px 1fr 60px; }
    .cut { padding-left: 19px; }
    .view { grid-template-columns: 70px 52px 104px 125px 70px 73px; }
    .intent { grid-template-columns: 96px 66px 62px 20px; }
    .invest { grid-template-columns: 76px 72px; }
    .big { flex-direction: column; justify-content: flex-start; padding-top: 4px; gap: 14px; }
    .big .text { display: flex; flex-direction: column; align-items: center; }
    .big .line { display: flex; align-items: center; gap: 4px; height: 20px; }
    .ruled { border-left: 1px solid #aab1b5; margin: 4px 0 14px; padding-top: 0; }
    .col { display: grid; grid-template-rows: repeat(3, 34px); align-content: start; justify-items: start; }
    .comp .col { padding-left: 2px; }
    .small { gap: 6px; height: 30px; align-self: start; }
    .small .caret { margin-left: 3px; }
    .off { color: #a9acae; }
    .gtitle { height: 20px; gap: 4px; }

    .quick { flex: none; display: flex; align-items: center; gap: 3px; height: 30px; padding-left: 2px; border-bottom: 1px solid #b3bbbf; }
    .quick .q { width: 26px; height: 26px; }
    .quick .m { width: 16px; height: 26px; }
    .quick .sep { width: 1px; height: 29px; background: #aab1b5; }
    .quick .custom { flex-direction: column; gap: 2px; margin-left: 3px; }
    .bar { width: 11px; height: 2px; background: #5b5f61; }

    .main { flex: 1; min-height: 0; display: flex; }
    .side { flex: none; width: 356px; border-right: 2px solid #dfe3e6; }
    .ptabs { display: flex; height: 36px; background: #d9dedd; font-size: 14px; }
    .ptab { gap: 9px; justify-content: flex-start; overflow: hidden; padding-top: 1px; }
    .ptab.sel { width: 124px; padding-left: 11px; background: #f9fbfb; }
    .ptab.fold { width: 112px; padding-left: 9px; gap: 5px; }
    .ptab .name { overflow: hidden; }
    .ptab.fold .name { mask-image: linear-gradient(90deg, #000 80%, transparent); }
    .ptab.fav { flex: 1; padding-left: 19px; gap: 6px; }
    .phead { display: flex; align-items: center; height: 36px; padding: 2px 13px 0 35px; gap: 10px; }
    .phead h2 { flex: 1; margin: 0; font-size: 14px; font-weight: 700; line-height: 20px; }
    .phead .last { margin-left: 4px; }
    .search { display: flex; align-items: center; padding: 0 15px 0 13px; gap: 5px; height: 34px; }
    .field { flex: none; display: flex; align-items: center; width: 258px; height: 34px; border: 1px solid #a5acb1; background: #fff; padding-right: 6px; }
    .field input { flex: 1; min-width: 0; border: 0; outline: 0; font: inherit; background: none; height: 30px; }
    .x10 { width: 10px; height: 10px; }
    .search .arrow { margin: 0 8px 0 2px; }
    .tree { list-style: none; margin: 7px 6px 0 10px; padding: 0 0 6px; border-bottom: 3px solid #6dbb55; font-size: 12px; line-height: 24px; }
    .tree li { display: flex; align-items: center; height: 24px; gap: 7px; padding-left: 9px; }
    .tree .root { padding-left: 4px; }
    .twist { width: 9px; height: 12px; margin-right: 4px; }
    .twist.shown { background: #85898b; clip-path: polygon(0 0, 100% 50%, 0 100%); }
    .packed { width: 6px; height: 8px; border: 1px solid #4b4f52; align-self: flex-start; margin-top: 4px; margin-right: -5px; }

    .canvas { position: relative; flex: 1; min-width: 0; background: #e9eaee; display: flex; justify-content: center; align-items: flex-start; padding: 7px 0 0 4px; }
    .vtools { position: relative; display: grid; grid-template-columns: repeat(15, 1fr); width: 490px; height: 38px; padding: 0 2px; align-items: center; background: #f8f9fa; border: 1px solid #9a9fa5; }
    .vt { position: relative; width: 28px; height: 28px; justify-self: center; border: 1px solid transparent; }
    .vt.on { background: #dfe1e2; border-color: #a5a9ab; }
    .corner { position: absolute; right: 0; bottom: 1px; width: 4px; height: 4px; background: #4b4f52; clip-path: polygon(100% 0, 100% 100%, 0 100%); }

    .status { flex: none; display: flex; align-items: center; height: 43px; border-top: 1px solid #b3bbbf; padding: 0 17px 0 7px; }
    .left { display: flex; align-items: center; gap: 10px; padding-top: 14px; }
    .left .on { width: 26px; height: 26px; background: #dfe1e2; border: 1px solid #a5a9ab; margin-right: -3px; }
    .left .rule { width: 1px; height: 26px; background: #a5acb1; margin-left: 3px; }
    .right { margin-left: auto; display: flex; align-items: flex-start; height: 100%; padding-top: 5px; }
    .right .rule { width: 1px; height: 36px; background: #a5acb1; margin-right: 3px; }
    .findbox { display: flex; width: 51px; height: 30px; margin: 1px 4px 0 0; border: 1px solid #b3b8bb; }
    .findbox .a { flex: 1; }
    .findbox .b { width: 17px; border-left: 1px solid #b3b8bb; }
    .cube { width: 49px; height: 35px; margin-top: 1px; border: 1px solid #9ea3a6; }
    .pick { position: relative; width: 217px; height: 28px; margin: 5px 0 0 119px; }
    .pick select { appearance: none; width: 100%; height: 100%; border: 1px solid #9ea3a6; border-radius: 0; background: #f9fbfb; font: inherit; color: inherit; padding: 0 8px; }
    .pick .end { position: absolute; right: 1px; top: 1px; width: 19px; height: 26px; border-left: 1px solid #9ea3a6; display: flex; align-items: center; justify-content: center; pointer-events: none; }
  `;

  private cell(c: Big | Small[]) {
    if (Array.isArray(c)) {
      return html`<div class="col">${c.map((s) => html`<button class=${classMap({ small: true, off: !!s.off })} aria-label=${s.name}>${icon(s.icon)}${s.label ?? nothing}${s.menu ? caret(s.off ? "off" : "") : nothing}</button>`)}</div>`;
    }
    const [one, two] = c.lines;
    return html`<button class=${classMap({ big: true, ruled: !!c.rule })}>${icon(c.icon, "lg")}
      <span class="text"><span class="line">${one}</span><span class="line">${two ?? nothing}${c.menu ? caret() : nothing}</span></span></button>`;
  }

  render() {
    return html`
      <svg class="defs" aria-hidden="true"><defs>
        <radialGradient id="g-sphere" cx="0.38" cy="0.4" r="0.65"><stop offset="0" stop-color="#f5f7fa"></stop><stop offset="0.14" stop-color="#a9b3c4"></stop><stop offset="0.6" stop-color="#939db0"></stop><stop offset="1" stop-color="#6f788a"></stop></radialGradient>
        <linearGradient id="g-paper" x1="0" y1="0" x2="1" y2="1"><stop offset="0" stop-color="#fff"></stop><stop offset="1" stop-color="#d3dae2"></stop></linearGradient>
        <linearGradient id="g-paint" x1="0" y1="0" x2="1" y2="1"><stop offset="0" stop-color="#d5eaf3"></stop><stop offset="1" stop-color="#3f87a3"></stop></linearGradient>
        <linearGradient id="g-panel" x1="0" y1="0" x2="1" y2="1"><stop offset="0" stop-color="#fff"></stop><stop offset="1" stop-color="#c4dbe8"></stop></linearGradient>
      </defs></svg>

      <header class="title">
        <div class="brand">${icon("logo")}<span class="word">creo<sup>°</sup></span></div>
        <div class="caption">EEEERE (Active) - Creo Parametric 7.0</div>
        <div class="winbtns"><button aria-label="Minimize">${icon("minimize", "xs")}</button><button aria-label="Restore">${icon("restore", "xs")}</button><button aria-label="Close">${icon("close", "xs")}</button></div>
      </header>

      <nav class="tabs">
        ${TABS.map((t) => html`<button class=${classMap({ tab: true, file: t === "File", active: t === this.tab })} @click=${() => (this.tab = t)}>${t}</button>`)}
        <div class="tools"><button aria-label="Minimize Ribbon">${icon("up", "xs")}</button><button aria-label="Search">${icon("find", "xs")}</button>
          <button class="pair" aria-label="Learning">${icon("learn", "xs")}${caret("white")}</button><button class="help">?</button></div>
      </nav>

      <section class="ribbon">
        ${GROUPS.map((g) => html`<div class="group"><div class="cells ${g.id}">${g.cells.map((c) => this.cell(c))}</div><button class="gtitle">${g.title}${caret()}</button></div>`)}
      </section>

      <div class="quick">
        ${QUICK.map(([i, name, menu, off]) => html`<button class="q" aria-label=${name}>${icon(i)}</button>${menu ? html`<button class="m" aria-label="${name} menu">${caret(off ? "off" : "")}</button>` : nothing}`)}
        <span class="sep"></span><button class="m custom" aria-label="Customize"><span class="bar"></span>${caret()}</button>
      </div>

      <div class="main">
        <aside class="side">
          <div class="ptabs">
            <button class="ptab sel">${icon("tree", "nodes")}<span class="name">Model Tree</span></button>
            <button class="ptab fold">${icon("folders", "xl")}<span class="name">Folder Browser</span></button>
            <button class="ptab fav">${icon("favorite", "xl")}<span class="name">Favorites</span></button>
          </div>
          <div class="phead"><h2>Model Tree</h2>
            <button aria-label="Tools">${icon("tools", "xl")}</button>${caret()}
            <button aria-label="Settings">${icon("settings", "xl")}</button>${caret()}
            <button class="last" aria-label="Tree Columns">${icon("columns", "xl")}</button></div>
          <div class="search">${icon("funnel")}
            <div class="field"><input type="text" aria-label="Filter tree" /><button aria-label="Clear">${icon("clear", "x10")}</button></div>
            <button class="arrow" aria-label="Search options">${caret()}</button><button aria-label="Add">${icon("plus", "xs")}</button></div>
          <ul class="tree">
            <li class="root">${icon("asm", "sm")}EEEERE.ASM</li>
            ${TREE.map((n) => html`<li><span class=${classMap({ twist: true, shown: !!n.open })}></span>${icon(n.icon, "sm")}${n.packed ? html`<span class="packed"></span>` : nothing}<span>${n.name}</span></li>`)}
          </ul>
        </aside>
        <main class="canvas">
          <model-viewport></model-viewport>
          <div class="vtools">${VIEWTOOLS.map(([i, name, kind]) => html`<button class=${classMap({ vt: true, on: kind === "on" })} aria-label=${name}>${icon(i)}${kind === "more" ? html`<i class="corner"></i>` : nothing}</button>`)}</div>
        </main>
      </div>

      <footer class="status">
        <div class="left"><button class="on" aria-label="Navigator">${icon("tree")}</button><button aria-label="Browser">${icon("globe")}</button><button aria-label="Full Screen">${icon("panel")}</button><span class="rule"></span></div>
        <div class="right"><span class="rule"></span><span class="rule"></span>
          <div class="findbox"><button class="a" aria-label="Find">${icon("binoculars")}</button><button class="b" aria-label="Find menu">${caret()}</button></div>
          <button class="cube" aria-label="Box select">${icon("boxselect", "xl")}</button>
          <div class="pick"><select aria-label="Selection filter"><option>Geometry</option></select><span class="end">${caret()}</span></div></div>
      </footer>`;
  }
}
